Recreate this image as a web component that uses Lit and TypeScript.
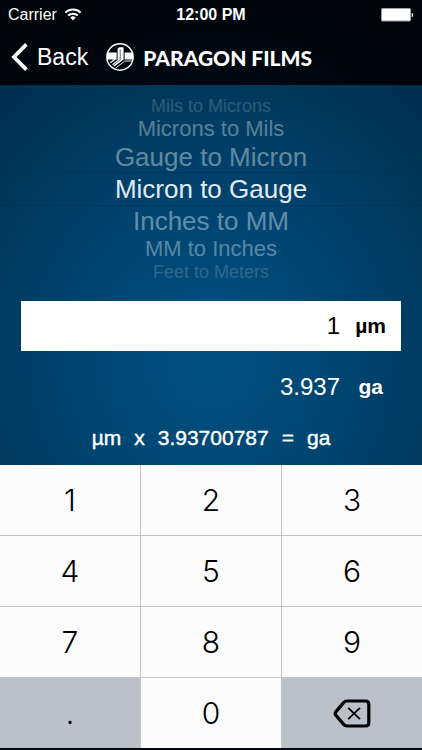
import { LitElement, html, css, svg } from "lit";
import { customElement, state } from "lit/decorators.js";
import { classMap } from "lit/directives/class-map.js";

interface Conversion {
  name: string;
  from: string;
  to: string;
  factor: number;
}

const CONVERSIONS: Conversion[] = [
  { name: "Mils to Microns", from: "mil", to: "µm", factor: 25.4 },
  { name: "Microns to Mils", from: "µm", to: "mil", factor: 0.03937008 },
  { name: "Gauge to Micron", from: "ga", to: "µm", factor: 0.254 },
  { name: "Micron to Gauge", from: "µm", to: "ga", factor: 3.93700787 },
  { name: "Inches to MM", from: "in", to: "mm", factor: 25.4 },
  { name: "MM to Inches", from: "mm", to: "in", factor: 0.03937008 },
  { name: "Feet to Meters", from: "ft", to: "m", factor: 0.3048 },
];

const KEYS = ["1", "2", "3", "4", "5", "6", "7", "8", "9", ".", "0", "del"];

const wifiIcon = svg`
  <svg width="18" height="13" viewBox="0 0 18 13" aria-hidden="true">
    <g fill="none" stroke="#fff" stroke-width="2">
      <path d="M1.4 4.6 A11 11 0 0 1 16.6 4.6"/>
      <path d="M4.2 7.6 A7 7 0 0 1 13.8 7.6"/>
    </g>
    <path d="M9 12.4 L6.3 9.6 A4 4 0 0 1 11.7 9.6 Z" fill="#fff"/>
  </svg>`;

const batteryIcon = svg`
  <svg width="33" height="14" viewBox="0 0 33 14" aria-hidden="true">
    <rect x="0.5" y="0.5" width="29" height="12.5" rx="1" fill="#fff" stroke="#9aa0a5"/>
    <path d="M31 5 Q32.6 7 31 9 Z" fill="#fff" stroke="#fff" stroke-width="0.6"/>
  </svg>`;

const chevronIcon = svg`
  <svg width="18" height="30" viewBox="0 0 18 30" aria-hidden="true">
    <path d="M15.4 2.4 L3 15 L15.4 27.6" fill="none" stroke="#fff" stroke-width="3.8"/>
  </svg>`;

const brandIcon = svg`
  <svg width="30" height="30" viewBox="0 0 30 30" aria-hidden="true">
    <circle cx="14" cy="15" r="13.2" fill="none" stroke="#fff" stroke-width="1.4"/>
    <path d="M1.6 10.6 H10.6 V17.4 H1.2 A13 13 0 0 1 1.6 10.6 Z" fill="#fff"/>
    <path d="M18.6 10.6 H26.4 A13 13 0 0 1 26.8 17.4 H18.6 Z" fill="#fff"/>
    <path d="M11.6 6.4 L13.4 5.2 H17.6 V17.4 L8.4 24.4 L6.2 22.2 L11.6 18 Z" fill="#fff"/>
    <path d="M7 23.4 L14.2 17.8 V7.4" fill="none" stroke="#00060c" stroke-width="0.6"/>
    <path d="M4.4 20.8 L9.4 17" fill="none" stroke="#fff" stroke-width="1.3"/>
    <path d="M9.8 26 L18.8 19 H26" fill="none" stroke="#fff" stroke-width="0.9"/>
    <circle cx="28.2" cy="5.8" r="0.6" fill="#8d979e"/>
  </svg>`;

const deleteIcon = svg`
  <svg width="38" height="29" viewBox="0 0 38 29" aria-hidden="true">
    <path d="M14 2 H32.5 Q35.8 2 35.8 5.2 V23.8 Q35.8 27 32.5 27 H14 Q12 27 10.6 25.4 L3 16.4 Q1.4 14.5 3 12.6 L10.6 3.6 Q12 2 14 2 Z"
      fill="none" stroke="#000" stroke-width="3.2"/>
    <path d="M15.2 8.8 L27 20.2 M27 8.8 L15.2 20.2" fill="none" stroke="#000" stroke-width="1.8"/>
  </svg>`;

@customElement("app-root")
export class AppRoot extends LitElement {
  @state() private selected = 3;
  @state() private amount = "1";

  static styles = css`
    :host {
      display: flex;
      flex-direction: column;
      box-sizing: border-box;
      min-height: 100vh;
      padding-bottom: 2px;
      color: #fff;
      background: #02080e;
      font-family: "Liberation Sans", Arial, sans-serif;
    }
    button,
    input {
      margin: 0;
      padding: 0;
      border: 0;
      border-radius: 0;
      background: none;
      color: inherit;
      font: inherit;
    }
    button {
      cursor: pointer;
    }
    svg {
      display: block;
    }
    .top {
      height: 85px;
      background: radial-gradient(ellipse at 50% 100%, #000811, #010408);
    }
    .status {
      display: grid;
      grid-template-columns: 1fr auto 1fr;
      align-items: center;
      height: 29px;
      padding: 0 8px;
      font-size: 16px;
    }
    .carrier {
      display: flex;
      align-items: center;
      gap: 7px;
    }
    .clock {
      font-weight: 700;
    }
    .battery {
      justify-self: end;
    }
    .nav {
      display: flex;
      align-items: center;
      gap: 18px;
      height: 56px;
      padding: 0 11px;
    }
    .back {
      display: flex;
      align-items: center;
      gap: 8px;
      font-size: 23px;
    }
    .brand {
      display: flex;
      align-items: center;
      gap: 7px;
      margin: 0;
      font-family: Lato, sans-serif;
      font-size: 21px;
      font-weight: 900;
      white-space: nowrap;
    }
    .converter {
      flex: 1;
      background: radial-gradient(ellipse 88% 108% at 50% 72%, #005080 0%, #004470 38%, #003557 72%, #002845 100%);
    }
    .picker {
      display: flex;
      flex-direction: column;
      align-items: stretch;
      padding: 11px 0 19px;
    }
    .option {
      height: 20px;
      font-size: 18px;
      line-height: 20px;
      color: #fff;
      opacity: 0.17;
    }
    .option.mid {
      height: 26px;
      font-size: 22px;
      line-height: 26px;
      opacity: 0.34;
    }
    .option.near {
      height: 30px;
      font-size: 26px;
      line-height: 30px;
      opacity: 0.38;
    }
    .option.current {
      box-sizing: border-box;
      height: 34px;
      border-top: 1px solid #00304f99;
      border-bottom: 1px solid #00304f99;
      font-size: 26px;
      line-height: 32px;
      color: #e2ebf2;
      opacity: 1;
    }
    .field {
      display: flex;
      align-items: center;
      height: 50px;
      margin: 0 21px;
      padding-right: 15px;
      background: #fff;
      color: #000;
    }
    .amount {
      flex: 1;
      min-width: 0;
      outline: none;
      text-align: right;
      font-size: 24px;
    }
    .unit {
      box-sizing: border-box;
      width: 46px;
      text-align: right;
      font-size: 21px;
      font-weight: 700;
    }
    .result {
      display: flex;
      align-items: center;
      justify-content: flex-end;
      height: 72px;
      margin: 0 36px;
      font-size: 24px;
    }
    .result .unit {
      padding-right: 3px;
    }
    .formula {
      display: flex;
      justify-content: center;
      gap: 13px;
      height: 40px;
      margin: 0;
      font-size: 21px;
      line-height: 30px;
      -webkit-text-stroke: 0.4px #fff;
    }
    .keypad {
      display: grid;
      grid-template-columns: repeat(3, 1fr);
      gap: 1px;
      background: #c3c5ca;
    }
    .key {
      display: flex;
      align-items: center;
      justify-content: center;
      height: 70px;
      background: #fcfcfc;
      color: #000;
      font-family: Inter, "Liberation Sans", sans-serif;
      font-size: 30px;
      font-weight: 300;
    }
    .key.side {
      background: #bcc0c8;
    }
  `;

  private press(key: string) {
    if (key === "del") this.amount = this.amount.slice(0, -1);
    else if (key !== "." || !this.amount.includes(".")) this.amount += key;
  }

  private onInput(e: Event) {
    this.amount = (e.target as HTMLInputElement).value;
  }

  render() {
    const c = CONVERSIONS[this.selected];
    const value = Number(((parseFloat(this.amount) || 0) * c.factor).toFixed(3));
    return html`
      <header class="top">
        <div class="status">
          <span class="carrier">Carrier ${wifiIcon}</span>
          <span class="clock">12:00 PM</span>
          <span class="battery">${batteryIcon}</span>
        </div>
        <nav class="nav">
          <button class="back">${chevronIcon}Back</button>
          <h1 class="brand">${brandIcon}PARAGON FILMS</h1>
        </nav>
      </header>
      <main class="converter">
        <div class="picker" role="listbox" aria-label="Conversion">
          ${CONVERSIONS.map((item, i) => {
            const distance = Math.abs(i - this.selected);
            return html`<button
              role="option"
              aria-selected=${i === this.selected}
              class=${classMap({
                option: true,
                current: distance === 0,
                near: distance === 1,
                mid: distance === 2,
              })}
              @click=${() => (this.selected = i)}
            >${item.name}</button>`;
          })}
        </div>
        <div class="field">
          <input
            id="amount"
            class="amount"
            inputmode="decimal"
            .value=${this.amount}
            @input=${this.onInput}
          />
          <label class="unit" for="amount">${c.from}</label>
        </div>
        <div class="result">
          <output for="amount">${value}</output>
          <span class="unit">${c.to}</span>
        </div>
        <p class="formula">
          <span>${c.from}</span><span>x</span><span>${c.factor}</span><span>=</span><span>${c.to}</span>
        </p>
      </main>
      <div class="keypad">
        ${KEYS.map(
          (key) => html`<button
            class=${classMap({ key: true, side: key === "." || key === "del" })}
            aria-label=${key === "del" ? "Delete" : key}
            @click=${() => this.press(key)}
          >${key === "del" ? deleteIcon : key}</button>`
        )}
      </div>
    `;
  }
}
